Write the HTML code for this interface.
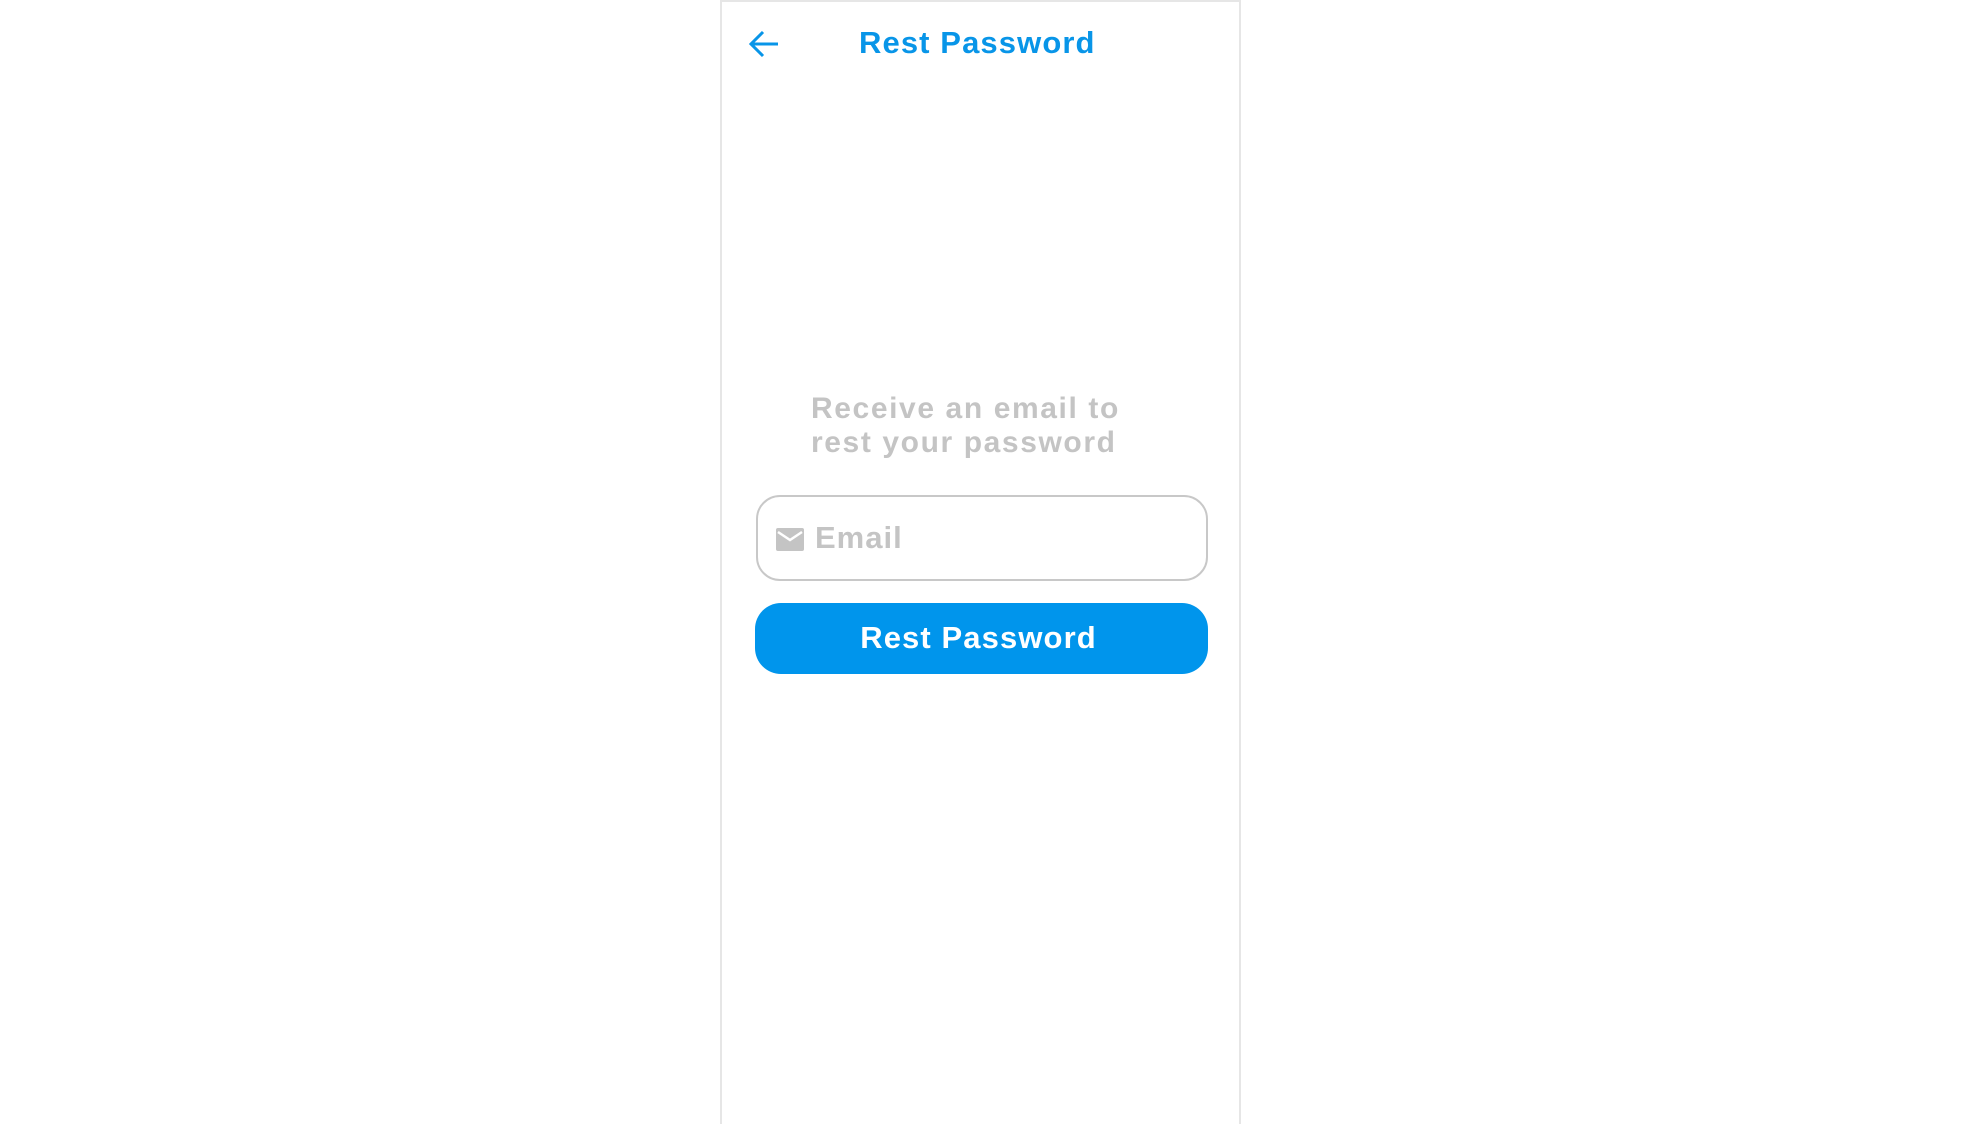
<!DOCTYPE html>
<html><head><style>
body{margin:0;width:1962px;height:1124px;background:#fff;position:relative;font-family:"Liberation Sans",sans-serif;overflow:hidden}
.frame{position:absolute;left:720px;top:0;width:521px;height:1124px;border:2px solid #e6e6e6;border-bottom:none;box-sizing:border-box}
.t{position:absolute;font-weight:bold;white-space:nowrap}
</style></head><body>
<div class="frame"></div>
<svg style="position:absolute;left:748px;top:30px" width="32" height="28" viewBox="0 0 32 28"><path d="M30 14H4M15 2L3 14l12 12" fill="none" stroke="#0895e8" stroke-width="3"/></svg>
<div class="t" style="left:859px;top:25px;font-size:31px;color:#0895e8;letter-spacing:1.1px">Rest Password</div>
<div class="t" style="left:811px;top:392px;font-size:30px;line-height:34px;color:#c4c4c4;letter-spacing:1.6px">Receive an email to<br>rest your password</div>
<div style="position:absolute;left:756px;top:495px;width:452px;height:86px;border:2.5px solid #c8c8c8;border-radius:24px;box-sizing:border-box"></div>
<svg style="position:absolute;left:776px;top:528px" width="28" height="23" viewBox="0 0 28 23"><rect width="28" height="23" rx="2" fill="#c4c4c4"/><path d="M2 4l12 8 12-8" fill="none" stroke="#fff" stroke-width="2.5"/></svg>
<div class="t" style="left:815px;top:520px;font-size:31px;color:#c4c4c4;letter-spacing:1px">Email</div>
<div style="position:absolute;left:755px;top:603px;width:453px;height:71px;background:#0095ec;border-radius:26px"></div>
<div class="t" style="left:752px;width:453px;text-align:center;top:620px;font-size:31px;color:#fff;letter-spacing:1.1px">Rest Password</div>
</body></html>
